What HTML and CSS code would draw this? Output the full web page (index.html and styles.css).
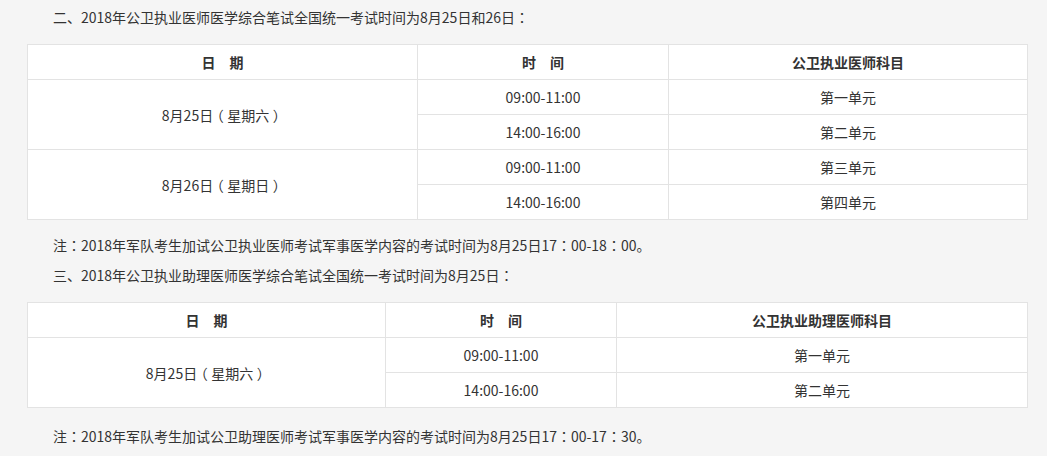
FILE: index.html
```html
<!DOCTYPE html>
<html lang="zh-CN">
<head>
<meta charset="utf-8">
<title>考试时间</title>
<link rel="stylesheet" href="styles.css">
</head>
<body>
<div class="content">
  <p class="para">二、2018年公卫执业医师医学综合笔试全国统一考试时间为8月25日和26日<span class="pc" lang="ko">：</span></p>
  <table class="exam exam-1">
    <colgroup><col class="c1"><col class="c2"><col class="c3"></colgroup>
    <thead>
      <tr><th>日　期</th><th>时　间</th><th>公卫执业医师科目</th></tr>
    </thead>
    <tbody>
      <tr><td rowspan="2">8月25日<span class="pp">（</span>星期六<span class="pp">）</span></td><td>09:00-11:00</td><td>第一单元</td></tr>
      <tr><td>14:00-16:00</td><td>第二单元</td></tr>
      <tr><td rowspan="2">8月26日<span class="pp">（</span>星期日<span class="pp">）</span></td><td>09:00-11:00</td><td>第三单元</td></tr>
      <tr><td>14:00-16:00</td><td>第四单元</td></tr>
    </tbody>
  </table>
  <p class="para">注<span class="pc" lang="ko">：</span>2018年军队考生加试公卫执业医师考试军事医学内容的考试时间为8月25日17<span class="pc" lang="ko">：</span>00-18<span class="pc" lang="ko">：</span>00。</p>
  <p class="para">三、2018年公卫执业助理医师医学综合笔试全国统一考试时间为8月25日<span class="pc" lang="ko">：</span></p>
  <table class="exam exam-2">
    <colgroup><col class="c1"><col class="c2"><col class="c3"></colgroup>
    <thead>
      <tr><th>日　期</th><th>时　间</th><th>公卫执业助理医师科目</th></tr>
    </thead>
    <tbody>
      <tr><td rowspan="2">8月25日<span class="pp">（</span>星期六<span class="pp">）</span></td><td>09:00-11:00</td><td>第一单元</td></tr>
      <tr><td>14:00-16:00</td><td>第二单元</td></tr>
    </tbody>
  </table>
  <p class="para">注<span class="pc" lang="ko">：</span>2018年军队考生加试公卫助理医师考试军事医学内容的考试时间为8月25日17<span class="pc" lang="ko">：</span>00-17<span class="pc" lang="ko">：</span>30。</p>
</div>
</body>
</html>
```

FILE: styles.css
```css
html, body {
  margin: 0;
  padding: 0;
  background: #f5f5f5;
}
body {
  font-family: "Noto Sans CJK SC", "Noto Sans", sans-serif;
  font-size: 14px;
  color: #333;
}
.content {
  width: 1000px;
  margin-left: 27px;
  padding-top: 2px;
}
.para {
  margin: 0;
  padding-left: 26px;
  line-height: 30px;
  height: 30px;
  white-space: nowrap;
}
.pc {
  font-family: "Noto Sans CJK KR", sans-serif;
}
.pp {
  font-feature-settings: "halt";
  padding: 0 3.5px;
}
.exam {
  width: 1000px;
  table-layout: fixed;
  border-collapse: collapse;
  background: #fff;
  margin: 12px 0 10px;
}
.exam th, .exam td {
  border: 1px solid #e3e3e3;
  height: 34px;
  padding: 0;
  text-align: center;
  vertical-align: middle;
  line-height: 20px;
  font-size: 14px;
}
.exam th {
  font-weight: bold;
}
.exam-1 .c1 { width: 390px; }
.exam-1 .c2 { width: 251px; }
.exam-1 .c3 { width: 359px; }
.exam-2 .c1 { width: 358px; }
.exam-2 .c2 { width: 231px; }
.exam-2 .c3 { width: 411px; }
.exam-2 { margin-bottom: 13px; }
```
